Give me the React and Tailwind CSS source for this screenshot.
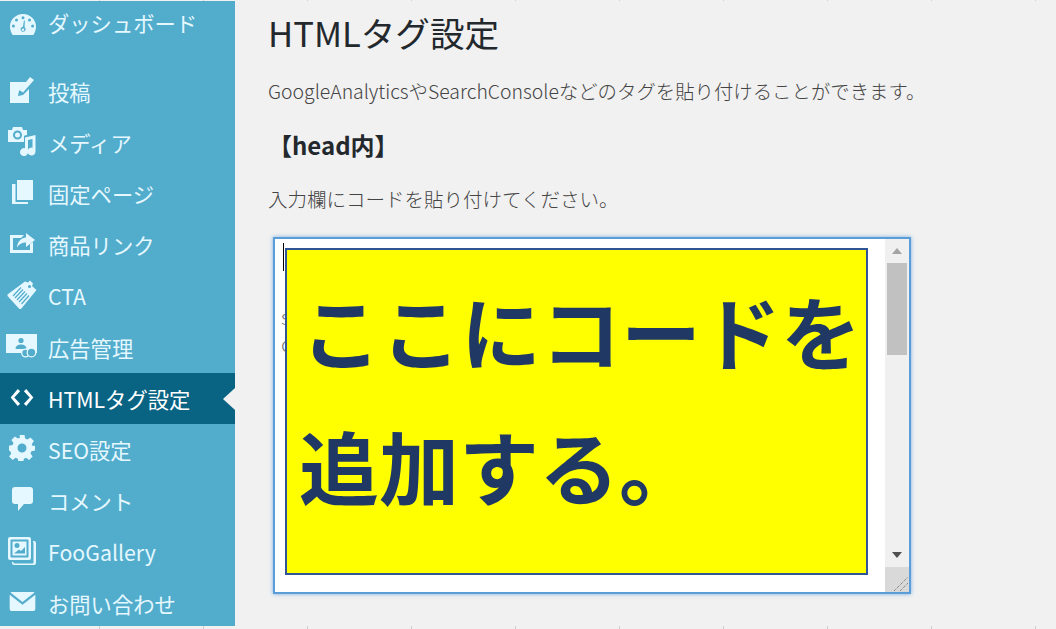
const Dash = () => (
  <svg width="26" height="21" viewBox="0 0 26 21" fill="currentColor">
    <path fillRule="evenodd" d="M13 0C5.800 0 0 5.600 0 12.500c0 3.200 1 6 2.600 8.500h20.800c1.600-2.500 2.600-5.300 2.600-8.500C26 5.600 20.200 0 13 0zM13 2.200a1.500 1.500 0 1 1 0 3 1.500 1.500 0 0 1 0-3zM6.500 4.600a1.500 1.500 0 1 1 0 3 1.500 1.500 0 0 1 0-3zM19.500 4.600a1.500 1.500 0 1 1 0 3 1.500 1.500 0 0 1 0-3zM3.400 10.500a1.500 1.500 0 1 1 0 3 1.500 1.500 0 0 1 0-3zM22.600 10.500a1.500 1.500 0 1 1 0 3 1.500 1.500 0 0 1 0-3zM13 12.800l.9-6.300h.9l-.2 6.800a2.500 2.500 0 1 1-1.600-.5zM13 14.500a1.300 1.300 0 1 0 0 2.600 1.300 1.300 0 0 0 0-2.600z" />
  </svg>
);

const Post = () => (
  <svg width="24" height="26" viewBox="0 0 24 26" fill="currentColor">
    <path d="M0 5h17l-8 9-1 5 5-1 6-6v14H0z" />
    <path d="M20 0l4 3-11 12.500-3.500-2.200z" />
  </svg>
);

const Media = () => (
  <svg width="28" height="29" viewBox="0 0 28 29" fill="currentColor">
    <path fillRule="evenodd" d="M0 3h4l1-3h9l1 3h4v5l-3 .7V15H0zM9.500 3.500a4.500 4.500 0 1 0 0 9 4.500 4.500 0 0 0 0-9z" />
    <path d="M9.500 5.500a2.500 2.500 0 1 1 0 5 2.500 2.500 0 0 1 0-5z" />
    <path d="M17 10.500l10.500-2.500V24.500a4 4 0 1 1-3-3.800V12l-4.500 1.100V25a4 4 0 1 1-3-3.800z" />
  </svg>
);

const Pages = () => (
  <svg width="21" height="24" viewBox="0 0 21 24" fill="currentColor">
    <path d="M5 0h16v20H5z" />
    <path d="M0 4h3.500v18H16v2H0z" />
  </svg>
);

const Share = () => (
  <svg width="25" height="20" viewBox="0 0 25 20" fill="currentColor">
    <path d="M0 2h14l-3 3H3v12h17v-6l3-2v11H0z" />
    <path d="M16 0l9 7-9 7V9.500c-4 0-7 1.500-9 5 .5-6 4-9.500 9-10z" />
  </svg>
);

const Tag = () => (
  <svg width="30" height="30" viewBox="0 0 30 30">
    <path fill="currentColor" d="M18 1.500L21 2.500 23 0.500 26 3.500 25 6 29.500 10 14 29 12.500 29 0.500 16 0.500 14.500z" />
    <circle cx="22.500" cy="6.500" r="1.500" fill="#52accc" />
    <path stroke="#52accc" strokeWidth="1.200" d="M14 7.500L6 16M16 9.500L8 18M18 11.500L10 20M20 13.500L12 22M22 15.500L14.500 24" />
  </svg>
);

const Ad = () => (
  <svg width="32" height="24" viewBox="0 0 32 24">
    <path fill="currentColor" d="M0 0h31v19H0z" />
    <circle cx="15" cy="6.500" r="2.600" fill="#52accc" />
    <path fill="#52accc" d="M9.500 15c0-3 2-4.500 5.500-4.500s5.500 1.500 5.500 4.500z" />
    <circle cx="19.500" cy="19" r="3.800" fill="#52accc" stroke="currentColor" strokeWidth="1.300" />
    <circle cx="25.500" cy="18.500" r="4.300" fill="#52accc" stroke="currentColor" strokeWidth="1.300" />
  </svg>
);

const Code = () => (
  <svg width="24" height="17" viewBox="0 0 24 18" fill="currentColor">
    <path d="M7.500 0L10 2.500 3.800 9 10 15.500 7.500 18 0 9z" />
    <path d="M16.500 0L14 2.500 20.200 9 14 15.500 16.500 18 24 9z" />
  </svg>
);

const Gear = () => (
  <svg width="26" height="26" viewBox="0 0 26 26" fill="currentColor">
    <path fillRule="evenodd" d="M10.500 0h5l.7 3.600 2.200.9 3-2.100 3.500 3.500-2.100 3 .9 2.200L26 10.800v4.700l-3.600.7-.9 2.200 2.100 3-3.500 3.500-3-2.100-2.200.9-.7 3.600h-4.700l-.7-3.600-2.200-.9-3 2.100-3.500-3.500 2.100-3-.9-2.200L0 15.500v-4.700l3.600-.7.9-2.200-2.100-3L5.900 1.400l3 2.100 2.200-.9zM13 8.500a4.500 4.500 0 1 0 0 9 4.500 4.500 0 0 0 0-9z" />
  </svg>
);

const Bubble = () => (
  <svg width="21" height="24" viewBox="0 0 21 24" fill="currentColor">
    <path d="M3 0h15a3 3 0 0 1 3 3v11a3 3 0 0 1-3 3h-6l-6 7v-7H3a3 3 0 0 1-3-3V3a3 3 0 0 1 3-3z" />
  </svg>
);

const Gallery = () => (
  <svg width="28" height="28" viewBox="0 0 28 28" fill="currentColor">
    <path fillRule="evenodd" d="M2 0h19a2 2 0 0 1 2 2v19a2 2 0 0 1-2 2H2a2 2 0 0 1-2-2V2a2 2 0 0 1 2-2zM3.500 2.500a1 1 0 0 0-1 1v16a1 1 0 0 0 1 1h16a1 1 0 0 0 1-1v-16a1 1 0 0 0-1-1z" />
    <path fillRule="evenodd" d="M4.500 4.500h14v14h-14zM9 6a2.500 2.500 0 1 0 0 5 2.500 2.500 0 0 0 0-5zM6 16.500h11V10l-4 4-2-1.500-2.500 2z" />
    <path d="M25 4h1a2 2 0 0 1 2 2v20a2 2 0 0 1-2 2H6a2 2 0 0 1-2-2v-1h1.500v.5a1 1 0 0 0 1 1h18a1 1 0 0 0 1-1V6a1 1 0 0 0-.5-.8z" />
  </svg>
);

const Mail = () => (
  <svg width="27" height="19" viewBox="0 0 27 20" fill="currentColor">
    <path d="M2 0h23a2 2 0 0 1 1.200.4L13.500 10.500.8.400A2 2 0 0 1 2 0z" />
    <path d="M0 3l13.500 10.500L27 3v15a2 2 0 0 1-2 2H2a2 2 0 0 1-2-2z" />
  </svg>
);

const menu = [
  { label: "投稿", icon: Post },
  { label: "メディア", icon: Media },
  { label: "固定ページ", icon: Pages },
  { label: "商品リンク", icon: Share },
  { label: "CTA", icon: Tag },
  { label: "広告管理", icon: Ad },
  { label: "HTMLタグ設定", icon: Code, active: true },
  { label: "SEO設定", icon: Gear },
  { label: "コメント", icon: Bubble },
  { label: "FooGallery", icon: Gallery },
  { label: "お問い合わせ", icon: Mail },
];

const MenuRow = ({ item }) => {
  const Icon = item.icon;
  return (
    <div className={`relative flex h-[51.2px] items-center ${item.active ? "bg-[#096484] text-white" : "text-[#e5f8ff]"}`}>
      <span className="mb-[3px] flex w-[48px] shrink-0 justify-center pr-[4px]">
        <Icon />
      </span>
      <span className="text-[21.300px] font-normal leading-none">{item.label}</span>
      {item.active && (
        <span className="absolute right-0 top-[15px] h-0 w-0 border-y-[11px] border-r-[12px] border-y-transparent border-r-[#f1f1f1]" />
      )}
    </div>
  );
};

const Ticks = ({ className }) => (
  <div className={`bg-[repeating-linear-gradient(90deg,transparent_0,transparent_99px,#cfcfcf_99px,#cfcfcf_100px,transparent_100px,transparent_104px)] ${className}`} />
);

export default function App() {
  return (
    <div className="flex h-[629px] w-[1056px] flex-col overflow-hidden bg-[#f1f1f1] font-['Noto_Sans_CJK_JP','Noto_Sans',sans-serif] font-light">
      <Ticks className="h-px shrink-0" />
      <div className="flex h-[625px] shrink-0">
        <aside className="w-[235px] shrink-0 bg-[#52accc]">
          <div className="flex h-[46px] items-center text-[#e5f8ff]">
            <span className="flex w-[44px] shrink-0 justify-center pl-[1px]">
              <Dash />
            </span>
            <span className="mb-[2px] ml-[4px] text-[21.300px] font-normal leading-none">ダッシュボード</span>
          </div>
          <div className="mt-[18.800px]">
            {menu.map((item) => (
              <MenuRow key={item.label} item={item} />
            ))}
          </div>
        </aside>
        <main className="min-w-0 flex-1 pl-[33px] text-[#444]">
          <h1 className="mt-[11px] text-[34.600px] font-normal leading-[40px] text-[#23282d]">HTMLタグ設定</h1>
          <p className="mt-[24px] text-[19.400px] leading-[30px]">GoogleAnalyticsやSearchConsoleなどのタグを貼り付けることができます。</p>
          <h2 className="mt-[24px] text-[24px] font-bold leading-[30px] text-[#23282d]">【head内】</h2>
          <p className="mt-[24px] text-[19.500px] leading-[30px]">入力欄にコードを貼り付けてください。</p>
          <div className="relative ml-[5px] mt-[23px] flex h-[357px] w-[638px] border-2 border-[#5b9dd9] bg-white shadow-[0_0_4px_rgba(91,157,217,0.8)]">
            <div className="relative flex-1">
              <span className="absolute left-[8px] top-[4px] h-[28px] w-px bg-black" />
              <span className="absolute left-[6px] top-[64px] text-[20px] leading-[27px] text-[#777]">s<br />c</span>
            </div>
            <div className="flex w-[24px] shrink-0 flex-col bg-[#f0f0f0]">
              <div className="flex h-[24px] items-center justify-center">
                <span className="h-0 w-0 border-x-[5.500px] border-b-[6px] border-x-transparent border-b-[#a3a3a3]" />
              </div>
              <div className="mx-[2px] h-[92px] bg-[#c1c1c1]" />
              <div className="flex-1" />
              <div className="flex h-[24px] items-center justify-center">
                <span className="h-0 w-0 border-x-[5.500px] border-t-[6px] border-x-transparent border-t-[#505050]" />
              </div>
              <div className="relative h-[25px] bg-[#d9d9d9]">
                <svg className="absolute bottom-0 right-0" width="16" height="16" viewBox="0 0 16 16" stroke="#666" strokeDasharray="1 1" fill="none">
                  <path d="M1 15L15 1M7 15L15 7" />
                </svg>
              </div>
            </div>
            <div className="absolute left-[10px] top-[9px] h-[327px] w-[583px] border-2 border-[#2f5597] bg-[#ffff00] pl-[12px] pt-[12px] text-[80px] font-bold leading-[135px] text-[#1f3864]">
              <div className="whitespace-nowrap pl-[2px]">ここにコードを</div>
              <div className="whitespace-nowrap">追加する。</div>
            </div>
          </div>
        </main>
      </div>
      <Ticks className="h-[3px] shrink-0" />
    </div>
  );
}
